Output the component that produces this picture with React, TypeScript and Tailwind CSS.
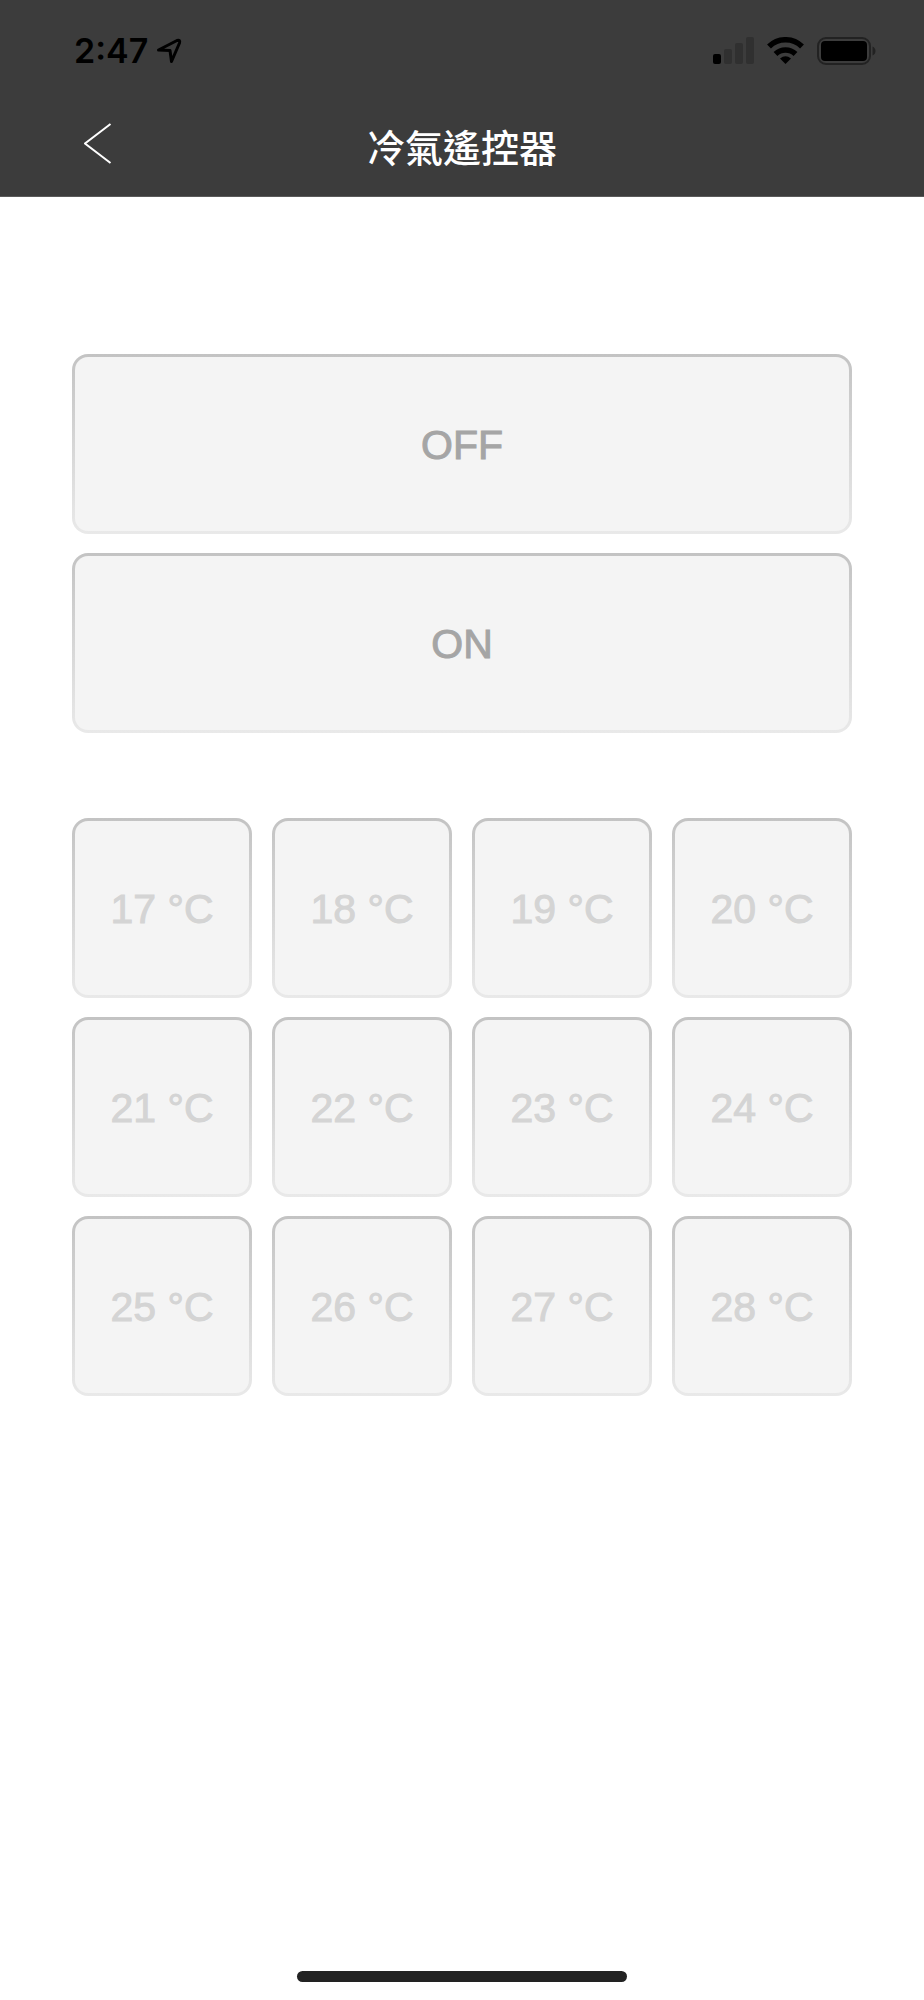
import { useState } from "react";

const temperatures = [17, 18, 19, 20, 21, 22, 23, 24, 25, 26, 27, 28];

interface RemoteButtonProps {
  label: string;
  muted?: boolean;
  onClick: () => void;
}

const RemoteButton = ({ label, muted, onClick }: RemoteButtonProps) => (
  <button
    type="button"
    onClick={onClick}
    className="flex h-[180px] w-full rounded-2xl bg-linear-to-b from-[#c3c3c3] to-[#e9e9e9] p-[3px]"
  >
    <span
      className={`flex h-full w-full items-center justify-center rounded-[13px] bg-[#f4f4f4] pt-[3px] text-[41px] leading-none [-webkit-text-stroke:1px] ${
        muted ? "text-[#d4d4d4]" : "text-[#a5a5a5]"
      }`}
    >
      {label}
    </span>
  </button>
);

const StatusBar = () => (
  <div className="flex h-[100px] items-center justify-between pt-[2px] pr-[48px] pl-[74px]">
    <div className="flex items-center gap-2 font-['Inter',sans-serif] text-[34px] leading-none font-semibold text-black">
      <span>2:47</span>
      <svg width="26" height="26" viewBox="0 0 26 26" fill="none" stroke="#000" strokeWidth="3" strokeLinejoin="round" aria-hidden="true">
        <path d="M2.5 12 L21 2.500 Q24.500 1.500 23.500 5 L15.500 23.500 L14 12.500 Z" />
      </svg>
    </div>
    <div className="flex items-center gap-3">
      <svg width="42" height="28" viewBox="0 0 42 28" aria-hidden="true">
        <rect x="0" y="17" width="8" height="10" rx="2" fill="#000" />
        <rect x="11" y="12" width="8" height="15" rx="2" fill="#303030" />
        <rect x="22" y="6" width="8" height="21" rx="2" fill="#303030" />
        <rect x="33" y="0" width="8" height="27" rx="2" fill="#303030" />
      </svg>
      <svg width="37" height="28" viewBox="0 0 37 28" fill="none" stroke="#000" aria-hidden="true">
        <path d="M2 9.500 A23.500 23.500 0 0 1 35 9.500" strokeWidth="5.500" />
        <path d="M8.500 17 A14.500 14.500 0 0 1 28.500 17" strokeWidth="5.500" />
        <path d="M13 21.500 Q18.500 17 24 21.500 L18.500 27 Z" fill="#000" stroke="none" />
      </svg>
      <svg width="60" height="28" viewBox="0 0 60 28" aria-hidden="true">
        <rect x="2" y="1" width="52" height="26" rx="8" fill="none" stroke="#222" strokeWidth="2" />
        <rect x="5" y="4" width="46" height="20" rx="4" fill="#000" />
        <path d="M56.500 9.500 Q59.500 11 59.500 14 Q59.500 17 56.500 18.500 Z" fill="#222" />
      </svg>
    </div>
  </div>
);

const App = () => {
  const [power, setPower] = useState<"on" | "off">("off");
  const [temperature, setTemperature] = useState<number | null>(null);

  return (
    <div
      data-power={power}
      data-temperature={temperature ?? ""}
      className="flex min-h-screen flex-col bg-white font-['Liberation_Sans','Noto_Sans_CJK_TC',sans-serif]"
    >
      <header className="border-b border-[#5a5a5a] bg-[#3c3c3c]">
        <StatusBar />
        <div className="grid h-24 grid-cols-[1fr_auto_1fr] items-center px-[72px] pb-1">
          <button type="button" aria-label="Back" className="flex h-16 w-12 items-start pt-2 pl-3">
            <svg width="28" height="42" viewBox="0 0 28 42" fill="none" stroke="#fff" strokeWidth="2" aria-hidden="true">
              <path d="M26.500 2 L1 21.500 L26.500 41" />
            </svg>
          </button>
          <h1 className="font-['Noto_Sans_CJK_TC',sans-serif] text-[38px] leading-none font-medium text-white">冷氣遙控器</h1>
        </div>
      </header>

      <main className="flex-1 px-[72px] pt-[157px]">
        <div className="flex flex-col gap-[19px]">
          <RemoteButton label="OFF" onClick={() => setPower("off")} />
          <RemoteButton label="ON" onClick={() => setPower("on")} />
        </div>
        <div className="mt-[85px] grid grid-cols-4 gap-x-5 gap-y-[19px]">
          {temperatures.map((t) => (
            <RemoteButton key={t} label={`${t} °C`} muted onClick={() => setTemperature(t)} />
          ))}
        </div>
      </main>

      {/* home indicator */}
      <footer className="flex justify-center pb-[18px]">
        <div className="h-[11px] w-[330px] rounded-full bg-[#222]" />
      </footer>
    </div>
  );
};

export default App;
